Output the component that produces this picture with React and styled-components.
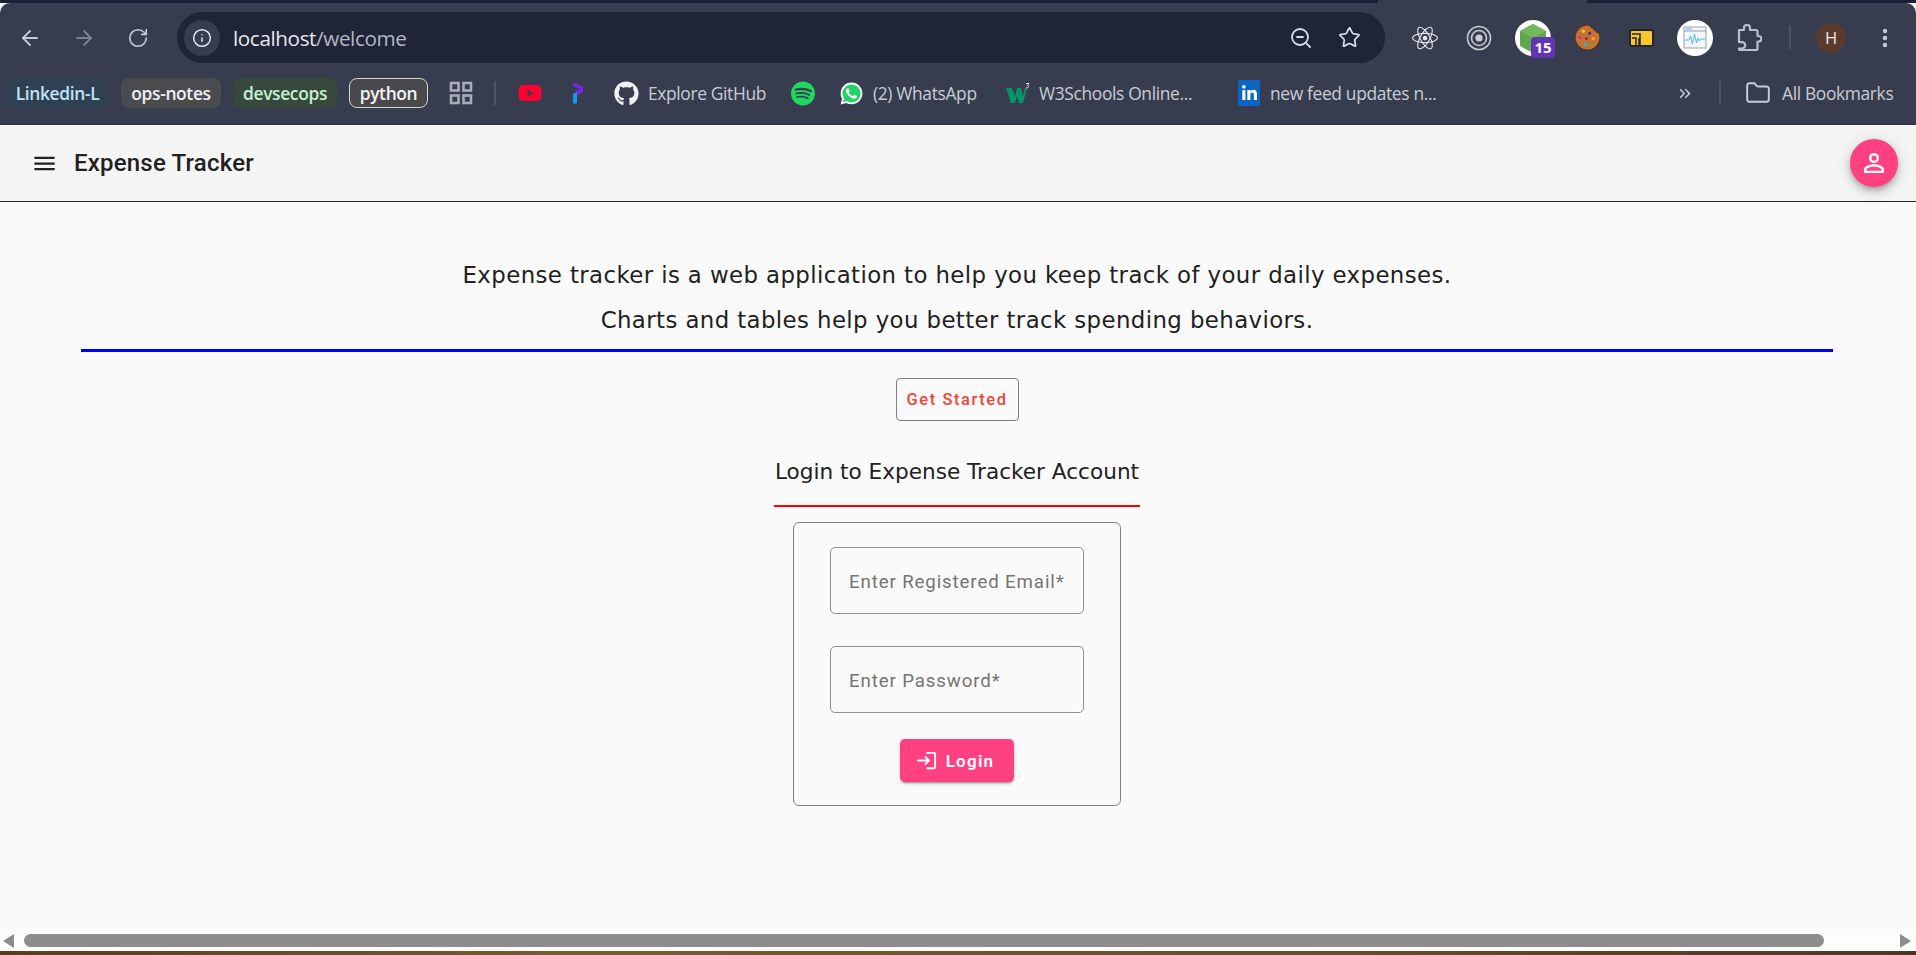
import React from "react";
import styled, { createGlobalStyle } from "styled-components";
import {
  ArrowLeft,
  ArrowRight,
  RotateCw,
  Info,
  ZoomOut,
  Star,
  Folder,
  ChevronsRight,
  EllipsisVertical,
} from "lucide-react";
import { FaGithub, FaSpotify, FaWhatsapp, FaYoutube, FaLinkedinIn, FaReact } from "react-icons/fa";
import { MdMenu, MdPersonOutline, MdLogin } from "react-icons/md";

const GlobalStyle = createGlobalStyle`
  html, body {
    margin: 0;
    padding: 0;
    height: 100%;
    overflow: hidden;
    background: #fafafa;
  }
  * { box-sizing: border-box; }
`;

const Page = styled.div`
  width: 1916px;
  height: 955px;
  display: flex;
  flex-direction: column;
  overflow: hidden;
  font-family: Roboto, "Liberation Sans", sans-serif;
`;

/* ---- browser chrome ---- */

const TabStrip = styled.div`
  height: 3px;
  flex: none;
  background: #1c2036;
  padding-left: 1378px;
`;

const ActiveTab = styled.div`
  width: 209px;
  height: 3px;
  background: #373c4f;
`;

const Chrome = styled.header`
  height: 122px;
  flex: none;
  background: #373c4f;
  border-radius: 10px 10px 0 0;
  color: #c7cad6;
`;

const Toolbar = styled.div`
  height: 72px;
  display: flex;
  align-items: flex-start;
  padding: 9px 0 0 3px;
`;

const NavButton = styled.div`
  width: 54px;
  height: 51px;
  display: flex;
  align-items: center;
  justify-content: center;
  color: ${(p) => (p.$off ? "#7d8192" : "#c5c9dc")};
`;

const Omnibox = styled.div`
  width: 1208px;
  height: 51px;
  margin: 0 13px 0 12px;
  padding: 0 11px 0 7px;
  display: flex;
  align-items: center;
  border-radius: 26px;
  background: #1f2437;
`;

const InfoChip = styled.div`
  width: 36px;
  height: 36px;
  border-radius: 50%;
  background: #373c4f;
  display: flex;
  align-items: center;
  justify-content: center;
  color: #e3e5ee;
`;

const Url = styled.div`
  margin-left: 13px;
  flex: 1;
  font: 400 20.7px "Open Sans", sans-serif;
  letter-spacing: -0.4px;
  color: #e6e8f0;
  span { color: #b4b7c4; }
`;

const OmniIcon = styled.div`
  width: 49px;
  display: flex;
  justify-content: center;
  color: #d9dbe6;
`;

const ExtSlot = styled.div`
  width: 54px;
  height: 51px;
  position: relative;
  display: flex;
  align-items: center;
  justify-content: center;
  color: #d5d7e0;
`;

const WhiteDisc = styled.div`
  width: 36px;
  height: 36px;
  border-radius: 50%;
  background: #fff;
  display: flex;
  align-items: center;
  justify-content: center;
`;

const CountBadge = styled.span`
  position: absolute;
  left: 25px;
  top: 25px;
  width: 24px;
  height: 21px;
  border-radius: 4px;
  background: #6135b5;
  color: #fff;
  font: 700 15px "Open Sans", sans-serif;
  line-height: 21px;
  text-align: center;
`;

const Divider = styled.div`
  width: 2px;
  height: 24px;
  flex: none;
  background: #4e5366;
  margin: ${(p) => p.$mt || 3}px ${(p) => p.$mr || 0}px 0 ${(p) => p.$ml || 0}px;
`;

const AvatarSlot = styled(ExtSlot)`
  margin-left: 13px;
`;

const Avatar = styled.div`
  width: 30px;
  height: 30px;
  border-radius: 50%;
  background: #5b3b2e;
  color: #f0e8e4;
  display: flex;
  align-items: center;
  justify-content: center;
  font: 400 16.5px "Open Sans", sans-serif;
`;

const BookmarkBar = styled.nav`
  height: 50px;
  display: flex;
  align-items: flex-start;
  padding: 3px 0 0 6px;
  border-bottom: 2px solid #333748;
`;

const Chip = styled.div`
  width: ${(p) => p.$w}px;
  height: 30px;
  margin-right: 12px;
  flex: none;
  display: flex;
  align-items: center;
  justify-content: center;
  border-radius: 8px;
  font: 600 17.4px "Open Sans", sans-serif;
  letter-spacing: -0.35px;
  background: ${(p) => p.$bg};
  color: ${(p) => p.$fg};
  border: ${(p) => (p.$outlined ? "1.5px solid #d6d6d6" : "none")};
`;

const BookmarkRow = styled.div`
  height: 30px;
  flex: none;
  display: flex;
  align-items: center;
  gap: ${(p) => p.$gap ?? 9}px;
  margin-left: ${(p) => p.$ml || 0}px;
  width: ${(p) => (p.$w ? `${p.$w}px` : "auto")};
  color: #c9ccd6;
  font: 400 17.4px "Open Sans", sans-serif;
  letter-spacing: -0.35px;
  white-space: nowrap;
`;

const WhatsAppBadge = styled.span`
  width: 25px;
  height: 25px;
  flex: none;
  display: flex;
  align-items: center;
  justify-content: center;
  color: #fff;
  border-radius: 50%;
  background: radial-gradient(circle, #25d366 0 10px, transparent 10.5px);
`;

const LinkedInBox = styled.span`
  width: 22px;
  height: 26px;
  display: flex;
  align-items: center;
  justify-content: center;
  border-radius: 2px;
  background: #0a66c2;
  color: #fff;
`;

/* ---- app ---- */

const AppBar = styled.div`
  height: 77px;
  flex: none;
  display: flex;
  align-items: center;
  padding: 0 18px 0 31px;
  background: #f5f5f5;
  border-bottom: 1.5px solid #222;
  color: #212121;
`;

const AppTitle = styled.h1`
  flex: 1;
  margin: 0 0 0 16px;
  font: 500 24px Roboto, sans-serif;
  letter-spacing: 0.2px;
  color: #212121;
`;

const Fab = styled.div`
  width: 48px;
  height: 48px;
  border-radius: 50%;
  background: #ff4081;
  color: #fff;
  display: flex;
  align-items: center;
  justify-content: center;
  box-shadow: 0 3px 5px -1px rgba(0, 0, 0, 0.2), 0 6px 10px rgba(0, 0, 0, 0.14), 0 1px 18px rgba(0, 0, 0, 0.12);
`;

const Main = styled.main`
  flex: 1;
  display: flex;
  flex-direction: column;
  align-items: center;
  padding: 50px 83px 0 81px;
  background: #fafafa;
`;

const Lead = styled.p`
  margin: 0;
  height: 46px;
  font: 400 22.85px/46px "DejaVu Sans", sans-serif;
  letter-spacing: 0.4px;
  color: #212121;
  white-space: nowrap;
`;

const SecondLead = styled(Lead)`
  margin-top: -1px;
`;

const BlueRule = styled.hr`
  width: 100%;
  height: 3px;
  margin: 6px 0 0;
  border: 0;
  background: #0000ff;
`;

const GetStarted = styled.button`
  width: 123px;
  height: 43px;
  margin-top: 26px;
  padding: 0;
  background: transparent;
  border: 1px solid #808080;
  border-radius: 4px;
  font: 500 16.4px Roboto, sans-serif;
  letter-spacing: 1.6px;
  color: #f44336;
`;

const LoginTitle = styled.h2`
  margin: 33px 0 0;
  width: 366px;
  height: 53px;
  border-bottom: 2px solid #f00;
  font: 400 21.6px/36px "DejaVu Sans", sans-serif;
  text-align: center;
  color: #212121;
  white-space: nowrap;
`;

const LoginCard = styled.form`
  width: 328px;
  height: 284px;
  margin-top: 15px;
  padding: 24px 36px 0;
  display: flex;
  flex-direction: column;
  align-items: center;
  border: 1px solid #808080;
  border-radius: 6px;
`;

const Field = styled.div`
  position: relative;
  width: 254px;
  height: 67px;
  flex: none;
  margin-bottom: 32px;
`;

const FieldLabel = styled.label`
  position: absolute;
  left: 19px;
  top: 0;
  font: 400 18.7px/70px Roboto, sans-serif;
  letter-spacing: 0.87px;
  color: #757575;
  white-space: nowrap;
`;

const FieldInput = styled.input`
  width: 100%;
  height: 100%;
  background: transparent;
  border: 1px solid #909090;
  border-radius: 5px;
`;

const LoginButton = styled.button`
  width: 114px;
  height: 43px;
  margin-top: -6px;
  padding: 0 5px 0 0;
  display: flex;
  align-items: center;
  justify-content: center;
  gap: 8px;
  border: 0;
  border-radius: 5px;
  background: #ff4081;
  color: #fff;
  font: 600 17px Roboto, sans-serif;
  letter-spacing: 1.25px;
  box-shadow: 0 3px 1px -2px rgba(0, 0, 0, 0.2), 0 2px 2px rgba(0, 0, 0, 0.14), 0 1px 5px rgba(0, 0, 0, 0.12);
`;

const ScrollBar = styled.div`
  height: 22px;
  flex: none;
  display: flex;
  align-items: center;
  padding: 1px 5px 0 3px;
  background: #fdfdfd;
`;

const ScrollArrow = styled.div`
  width: 0;
  height: 0;
  flex: none;
  border-top: 7px solid transparent;
  border-bottom: 7px solid transparent;
  border-right: ${(p) => (p.$right ? "none" : "11px solid #8d8d8d")};
  border-left: ${(p) => (p.$right ? "11px solid #8d8d8d" : "none")};
`;

const ScrollTrack = styled.div`
  flex: 1;
  padding: 0 76px 0 10px;
`;

const ScrollThumb = styled.div`
  height: 13px;
  border-radius: 7px;
  background: #8d8d8d;
`;

const Desktop = styled.div`
  height: 4px;
  flex: none;
  background: linear-gradient(90deg, #5a3c22, #7a5a30 30%, #6a4c2a 70%, #4e3620);
`;

const CookieIcon = () => (
  <svg width="27" height="27" viewBox="0 0 26 26">
    <path d="M13 1c1 0 2 .2 3 .5.2 1.8 1.2 2.6 2.6 2.6.2 1.6 1.2 2.6 2.7 2.6.4 1.4 1.4 2.2 3.2 2.4.3 1.2.5 2.6.5 3.9a12 12 0 1 1-12-12z" fill="#c8702c" stroke="#4a3028" strokeWidth="1" />
    <circle cx="9" cy="7" r="1.7" fill="#e9c22f" />
    <circle cx="15" cy="9" r="1.5" fill="#2f3a8a" />
    <circle cx="5.5" cy="13" r="1.7" fill="#d13a9a" />
    <circle cx="12" cy="14" r="1.5" fill="#7a2f8a" />
    <circle cx="18.5" cy="14" r="1.7" fill="#e9a22f" />
    <circle cx="11" cy="20" r="1.7" fill="#2fb5d8" />
    <circle cx="17" cy="19" r="1.2" fill="#3ab56a" />
  </svg>
);

const YellowIcon = () => (
  <svg width="25" height="18" viewBox="0 0 25 18">
    <rect x="1" y="1" width="23" height="16" rx="2" fill="#f8c52f" stroke="#23252e" strokeWidth="2" />
    <path d="M3 5h8v12M3 9h4v8M10 17V9" fill="none" stroke="#23252e" strokeWidth="1.5" />
  </svg>
);

const MonitorIcon = () => (
  <svg width="24" height="23" viewBox="0 0 24 23">
    <rect x="1" y="1" width="22" height="21" fill="#f4f6f8" stroke="#9aa0a8" />
    <path d="M1 5h22" stroke="#9aa0a8" />
    <path d="M3 3h6" stroke="#4db8ef" strokeWidth="1.6" strokeDasharray="1.4 .8" />
    <path d="M2 14h4l1.5-4 2 8 2-10 2 9 1.5-5 1.5 3 1-2h4.5" fill="none" stroke="#4db8ef" strokeWidth="1" />
  </svg>
);

const NodeIcon = () => (
  <svg width="30" height="32" viewBox="0 0 30 32">
    <polygon points="15,2 28,9 28,24 15,31 2,24 2,9" fill="#5fa84e" />
    <polygon points="15,2 28,9 15,16 2,9" fill="#74b85c" />
  </svg>
);

const TargetIcon = () => (
  <svg width="26" height="30" viewBox="0 0 26 30">
    <circle cx="13" cy="15" r="11.5" fill="none" stroke="#c9cbd2" strokeWidth="1.6" />
    <circle cx="13" cy="15" r="7.5" fill="none" stroke="#c9cbd2" strokeWidth="1.6" />
    <circle cx="13" cy="15" r="3.6" fill="#c9cbd2" />
  </svg>
);

const ExtensionIcon = () => (
  <svg width="26" height="28" viewBox="0 0 26 28" fill="none" stroke="#b8bdd2" strokeWidth="2.2" strokeLinejoin="round">
    <path d="M3 6h5V4a3 3 0 0 1 6 0v2h6a1.5 1.5 0 0 1 1.5 1.5V12h1a2.8 2.8 0 0 1 0 5.6h-1v6.9A1.5 1.5 0 0 1 20 26H4.5A1.5 1.5 0 0 1 3 24.5h3a3.2 3.2 0 0 0 0-6.4H3V6z" />
  </svg>
);

const GridIcon = () => (
  <svg width="24" height="24" viewBox="0 0 24 24" fill="none" stroke="#a9acb8" strokeWidth="2.6">
    <rect x="2" y="2" width="7.5" height="7.5" />
    <rect x="14.5" y="2" width="7.5" height="7.5" />
    <rect x="2" y="14.5" width="7.5" height="7.5" />
    <rect x="14.5" y="14.5" width="7.5" height="7.5" />
  </svg>
);

const PolygonIcon = () => (
  <svg width="12" height="24" viewBox="0 0 12 24">
    <path d="M1 1l10 5v5L4 15v-5l4-2-7-3z" fill="#7a22ee" />
    <path d="M1 13l4-2v11l-2 1-2-1z" fill="#1098e8" />
  </svg>
);

const W3Icon = () => (
  <svg width="24" height="24" viewBox="0 0 24 24">
    <polygon points="0,7 6,7 9,15 11,7 15,7 17,15 19,7 21,7 17,22 13,22 11,15 9,22 5,22" fill="#049669" />
    <path d="M20 2.5h3l-1.5 2c1.6 0 1.6 2.5-1.5 2.5" fill="none" stroke="#e8eaf0" strokeWidth=".9" />
  </svg>
);

const App = () => {
  return (
    <Page>
      <GlobalStyle />
      <TabStrip>
        <ActiveTab />
      </TabStrip>
      <Chrome>
        <Toolbar>
          <NavButton><ArrowLeft size={24} strokeWidth={1.8} /></NavButton>
          <NavButton $off><ArrowRight size={24} strokeWidth={1.8} /></NavButton>
          <NavButton><RotateCw size={22} strokeWidth={1.8} /></NavButton>
          <Omnibox>
            <InfoChip><Info size={20} strokeWidth={1.8} /></InfoChip>
            <Url>localhost<span>/welcome</span></Url>
            <OmniIcon><ZoomOut size={24} strokeWidth={1.8} /></OmniIcon>
            <OmniIcon><Star size={23} strokeWidth={1.8} /></OmniIcon>
          </Omnibox>
          <ExtSlot><FaReact size={26} color="#e8e8ec" /></ExtSlot>
          <ExtSlot><TargetIcon /></ExtSlot>
          <ExtSlot>
            <WhiteDisc><NodeIcon /></WhiteDisc>
            <CountBadge>15</CountBadge>
          </ExtSlot>
          <ExtSlot><CookieIcon /></ExtSlot>
          <ExtSlot><YellowIcon /></ExtSlot>
          <ExtSlot><WhiteDisc><MonitorIcon /></WhiteDisc></ExtSlot>
          <ExtSlot><ExtensionIcon /></ExtSlot>
          <Divider $ml={13} $mt={13} />
          <AvatarSlot><Avatar>H</Avatar></AvatarSlot>
          <ExtSlot><EllipsisVertical size={24} strokeWidth={2.4} color="#c5c9dc" /></ExtSlot>
        </Toolbar>
        <BookmarkBar>
          <Chip $w={103} $bg="#2f4052" $fg="#c2e3f7">Linkedin-L</Chip>
          <Chip $w={100} $bg="#4a4b4f" $fg="#f0f0f0">ops-notes</Chip>
          <Chip $w={104} $bg="#37493c" $fg="#c8f0d4">devsecops</Chip>
          <Chip $w={79} $bg="#49494d" $fg="#f4f4f4" $outlined>python</Chip>
          <BookmarkRow $ml={9} $w={24}><GridIcon /></BookmarkRow>
          <Divider $ml={21} $mr={22} />
          <BookmarkRow $w={24}><FaYoutube size={26} color="#ff0033" /></BookmarkRow>
          <BookmarkRow $ml={30} $w={12}><PolygonIcon /></BookmarkRow>
          <BookmarkRow $ml={30} $w={152}>
            <FaGithub size={25} color="#f2f2f2" />
            Explore GitHub
          </BookmarkRow>
          <BookmarkRow $ml={25} $w={24}><FaSpotify size={25} color="#1ed760" /></BookmarkRow>
          <BookmarkRow $ml={24} $w={141}>
            <WhatsAppBadge><FaWhatsapp size={25} /></WhatsAppBadge>
            (2) WhatsApp
          </BookmarkRow>
          <BookmarkRow $ml={26} $w={190}>
            <W3Icon />
            W3Schools Online...
          </BookmarkRow>
          <BookmarkRow $ml={42} $w={200} $gap={10}>
            <LinkedInBox><FaLinkedinIn size={17} /></LinkedInBox>
            new feed updates n...
          </BookmarkRow>
          <BookmarkRow $ml={238} $w={18}><ChevronsRight size={23} strokeWidth={2.2} /></BookmarkRow>
          <Divider $ml={25} $mr={24} />
          <BookmarkRow $gap={11}>
            <Folder size={26} strokeWidth={1.8} />
            All Bookmarks
          </BookmarkRow>
        </BookmarkBar>
      </Chrome>

      <AppBar>
        <MdMenu size={27} />
        <AppTitle>Expense Tracker</AppTitle>
        <Fab><MdPersonOutline size={30} /></Fab>
      </AppBar>

      <Main>
        <Lead>Expense tracker is a web application to help you keep track of your daily expenses.</Lead>
        <SecondLead>Charts and tables help you better track spending behaviors.</SecondLead>
        <BlueRule />
        <GetStarted type="button">Get Started</GetStarted>
        <LoginTitle>Login to Expense Tracker Account</LoginTitle>
        <LoginCard>
          <Field>
            <FieldLabel htmlFor="email">Enter Registered Email*</FieldLabel>
            <FieldInput id="email" />
          </Field>
          <Field>
            <FieldLabel htmlFor="password">Enter Password*</FieldLabel>
            <FieldInput id="password" type="password" />
          </Field>
          <LoginButton type="button"><MdLogin size={23} />Login</LoginButton>
        </LoginCard>
      </Main>

      <ScrollBar>
        <ScrollArrow />
        <ScrollTrack><ScrollThumb /></ScrollTrack>
        <ScrollArrow $right />
      </ScrollBar>
      <Desktop />
    </Page>
  );
};

export default App;
